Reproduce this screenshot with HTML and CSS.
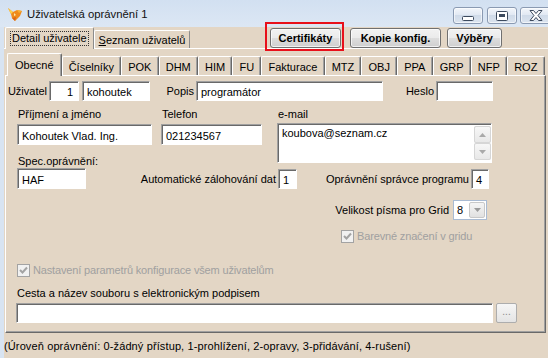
FILE: index.html
```html
<!DOCTYPE html>
<html lang="cs">
<head>
<meta charset="utf-8">
<title>Uživatelská oprávnění 1</title>
<link rel="stylesheet" href="styles.css">
</head>
<body>
<div class="window">
  <div class="titlebar">
    <svg class="app-icon" viewBox="0 0 16 16" width="16" height="16">
      <path d="M1 2 L6 6 L10 4 L15 5 L13 10 L8 15 L5 12 L4 8 Z" fill="#ef8a1c"/>
      <path d="M1 2 L6 6 L4 8 Z" fill="#fbd04a"/>
      <path d="M10 4 L15 5 L12 7 Z" fill="#f6b233"/>
      <path d="M5 12 L8 15 L9 11 Z" fill="#d9661a"/>
      <path d="M7 7 L9 9 L7 10 Z" fill="#fde9a8"/>
    </svg>
    <span class="title">Uživatelská oprávnění 1</span>
    <div class="caption">
      <span class="cbtn cbtn-min"><svg width="12" height="6" viewBox="0 0 12 6"><rect x="0.5" y="1.5" width="11" height="4" rx="1" fill="#fff" stroke="#3c4a5e"/></svg></span>
      <span class="cbtn cbtn-max"><svg width="12" height="10" viewBox="0 0 12 10"><rect x="0.5" y="0.5" width="11" height="9" rx="1" fill="#fff" stroke="#3c4a5e"/><rect x="3" y="3" width="6" height="3" fill="#3c4a5e"/></svg></span>
      <span class="cbtn cbtn-close"><svg width="14" height="11" viewBox="0 0 14 11"><path d="M1 0.5 H4.5 L7 3.5 L9.5 0.5 H13 L9 5.5 L13 10.5 H9.5 L7 7.5 L4.5 10.5 H1 L5 5.5 Z" fill="#fff" stroke="#3c4a5e" stroke-linejoin="round"/></svg></span>
    </div>
  </div>
  <div class="client">
    <div class="toprow">
      <div class="otabs">
        <div class="otab otab-active"><span class="focus">Detail uživatele</span></div>
        <div class="otab"><u>S</u>eznam uživatelů</div>
      </div>
      <div class="actions">
        <span class="highlight"><button class="btn btn-cert">Certifikáty</button></span>
        <button class="btn btn-kopie">Kopie konfig.</button>
        <button class="btn btn-vyber">Výběry</button>
      </div>
    </div>
    <div class="outer">
      <div class="itabs">
        <div class="itab itab-active">Obecné</div>
        <div class="itab">Číselníky</div>
        <div class="itab">POK</div>
        <div class="itab">DHM</div>
        <div class="itab">HIM</div>
        <div class="itab">FU</div>
        <div class="itab">Fakturace</div>
        <div class="itab">MTZ</div>
        <div class="itab">OBJ</div>
        <div class="itab">PPA</div>
        <div class="itab">GRP</div>
        <div class="itab">NFP</div>
        <div class="itab">ROZ</div>
      </div>
      <div class="panel">
        <div class="row r1">
          <span class="lbl lbl-user">Uživatel</span>
          <span class="field f-id num">1</span>
          <span class="field f-login">kohoutek</span>
          <span class="lbl lbl-popis">Popis</span>
          <span class="field f-popis">programátor</span>
          <span class="lbl lbl-heslo">Heslo</span>
          <span class="field f-heslo"></span>
        </div>
        <div class="row r2">
          <div class="col c1">
            <span class="cap">Příjmení a jméno</span>
            <span class="field f-tall">Kohoutek Vlad. Ing.</span>
            <span class="cap cap-spec">Spec.oprávnění:</span>
          </div>
          <div class="col c2">
            <span class="cap">Telefon</span>
            <span class="field f-tall">021234567</span>
          </div>
          <div class="col c3">
            <span class="cap">e-mail</span>
            <div class="field memo">
              <span class="memo-text">koubova@seznam.cz</span>
              <span class="sbar">
                <span class="sbtn"><svg width="7" height="4" viewBox="0 0 7 4"><path d="M0 4 L3.5 0 L7 4 Z" fill="#a9a9a9"/></svg></span>
                <span class="sbtn"><svg width="7" height="4" viewBox="0 0 7 4"><path d="M0 0 L3.5 4 L7 0 Z" fill="#a9a9a9"/></svg></span>
              </span>
            </div>
          </div>
        </div>
        <div class="row r3">
          <span class="field f-spec">HAF</span>
          <span class="lbl lbl-auto">Automatické zálohování dat</span>
          <span class="field f-small">1</span>
          <span class="lbl lbl-spravce">Oprávnění správce programu</span>
          <span class="field f-small f-four">4</span>
        </div>
        <div class="row r4">
          <span class="lbl lbl-grid">Velikost písma pro Grid</span>
          <span class="combo"><span class="combo-val">8</span><span class="combo-btn"><svg width="7" height="4" viewBox="0 0 7 4"><path d="M0 0 L3.5 4 L7 0 Z" fill="#9a9a9a"/></svg></span></span>
        </div>
        <div class="row r5">
          <span class="chk"><svg width="11" height="11" viewBox="0 0 11 11"><path d="M2 5 L4.5 7.5 L9 2.5" fill="none" stroke="#a3a3a3" stroke-width="2"/></svg></span>
          <span class="dis">Barevné značení v gridu</span>
        </div>
        <div class="row r6">
          <span class="chk"><svg width="11" height="11" viewBox="0 0 11 11"><path d="M2 5 L4.5 7.5 L9 2.5" fill="none" stroke="#a3a3a3" stroke-width="2"/></svg></span>
          <span class="dis">Nastavení parametrů konfigurace všem uživatelům</span>
        </div>
        <div class="row r7">
          <span class="cap">Cesta a název souboru s elektronickým podpisem</span>
        </div>
        <div class="row r8">
          <span class="field f-path"></span>
          <span class="browse">...</span>
        </div>
      </div>
    </div>
    <div class="status">(Úroveň oprávnění: 0-žádný přístup, 1-prohlížení, 2-opravy, 3-přidávání, 4-rušení)</div>
  </div>
</div>
</body>
</html>
```

FILE: styles.css
```css
* { box-sizing: border-box; }
html, body { margin: 0; padding: 0; }
body {
  width: 548px;
  height: 358px;
  overflow: hidden;
  background: #d8e4f2;
  font-family: "Liberation Sans", Arial, sans-serif;
  font-size: 11px;
  color: #000;
}
.window { display: flex; flex-direction: column; height: 358px; }

/* title bar */
.titlebar {
  height: 27px;
  flex: none;
  display: flex;
  align-items: flex-start;
  background: linear-gradient(#d2e0f1, #dce7f4);
}
.app-icon { margin: 6px 0 0 7px; flex: none; }
.title { margin: 7px 0 0 4px; font-size: 11.3px; line-height: 15px; color: #111; }
.caption { margin: 7px -15px 0 auto; display: flex; flex: none; }
.cbtn {
  height: 17px;
  width: 30px;
  display: flex;
  align-items: center;
  justify-content: center;
  border: 1px solid #8a9ab2;
  border-radius: 3px;
  background: linear-gradient(#f3f6fb 0%, #e2e9f3 45%, #d0dbe9 50%, #dbe4ef 100%);
  box-shadow: inset 0 0 0 1px rgba(255,255,255,0.6);
}
.cbtn-min svg { margin-top: 5px; }
.cbtn-max { margin-left: 4px; }
.cbtn-close { margin-left: 3px; width: 43px; justify-content: flex-start; padding-left: 8px; }

/* client */
.client { flex: 1; margin-left: 4px; background: #e3d6c5; display: flex; flex-direction: column; }
.toprow { height: 21px; display: flex; align-items: flex-end; flex: none; }
.otabs { display: flex; align-items: flex-end; margin-left: 1px; }
.otab {
  height: 18px;
  padding: 2px 4px 0;
  border: 1px solid #fff;
  border-right-color: #8c8c8c;
  border-bottom: none;
  border-radius: 2px 2px 0 0;
  line-height: 14px;
  background: #e3d6c5;
}
.otab-active {
  position: relative;
  height: 22px;
  margin-bottom: -1px;
  padding-top: 3px;
}
.focus { border: 1px dotted #333; padding: 0 1px; display: inline-block; line-height: 13px; }
.actions { margin: 1px 46px 0 auto; align-self: flex-start; display: flex; }
.btn {
  height: 20px;
  padding: 0;
  font-family: "Liberation Sans", Arial, sans-serif;
  font-size: 11px;
  font-weight: bold;
  color: #000;
  border: 1px solid #707070;
  border-radius: 3px;
  background: linear-gradient(#f2f2f2 0%, #ebebeb 48%, #dddddd 52%, #cfcfcf 100%);
  box-shadow: inset 0 0 0 1px rgba(255,255,255,0.7);
}
.highlight { position: relative; display: flex; }
.highlight::after {
  content: "";
  position: absolute;
  left: -5px; top: -6px; right: -3px; bottom: -3px;
  border: 2px solid #e8101a;
}
.btn-cert { width: 71px; }
.btn-kopie { width: 91px; margin-left: 9px; }
.btn-vyber { width: 55px; margin-left: 6px; }

.outer { border-top: 1px solid #fff; flex: none; }
.itabs { height: 26px; display: flex; align-items: flex-end; padding-left: 3px; }
.itab {
  height: 19px;
  padding: 3px 6.15px 0;
  line-height: 14px;
  border: 1px solid #fff;
  border-right-color: #696969;
  border-bottom: none;
  border-radius: 2px 2px 0 0;
  box-shadow: inset -1px 0 #a0a0a0;
  background: #e3d6c5;
  white-space: nowrap;
}
.itab-active {
  position: relative;
  height: 23px;
  margin-bottom: -1px;
  padding-top: 4px;
  padding-left: 7px; padding-right: 7px;
}
.panel {
  margin-left: 1px;
  width: 541px;
  height: 258px;
  border: 1px solid #fff;
  border-right-color: #696969;
  border-bottom-color: #696969;
  box-shadow: inset -1px -1px #a0a0a0;
}

/* form */
.row { display: flex; align-items: center; }
.lbl { white-space: nowrap; text-align: right; margin-right: 2px; flex: none; }
.field {
  display: block;
  flex: none;
  height: 20px;
  background: #fff;
  border: 1px solid #a0a0a0;
  border-right-color: #fff;
  border-bottom-color: #fff;
  box-shadow: inset 1px 1px #696969;
  padding: 3px 3px 0 4px;
  line-height: 14px;
  white-space: nowrap;
  overflow: hidden;
}
.num { text-align: right; padding-right: 5px; }

.r1 { margin-top: 5px; }
.lbl-user { width: 41px; }
.f-id { width: 30px; margin-right: 3px; }
.f-login { width: 68px; }
.lbl-popis { width: 44px; }
.f-popis { width: 187px; }
.lbl-heslo { width: 51px; }
.f-heslo { width: 57px; }

.r2 { margin-top: 7px; align-items: flex-start; }
.col { display: flex; flex-direction: column; }
.c1 { margin-left: 11px; width: 135px; }
.c2 { margin-left: 9px; width: 101px; }
.c3 { margin-left: 15px; width: 215px; }
.cap { display: block; height: 13px; line-height: 13px; padding-left: 1px; margin-bottom: 3px; white-space: nowrap; }
.f-tall { height: 21px; padding-top: 4px; }
.cap-spec { margin-top: 10px; margin-bottom: 0; }
.memo {
  margin-top: -1px;
  height: 40px;
  display: flex;
  padding: 2px 0 2px 4px;
}
.memo-text { flex: 1; line-height: 14px; }
.sbar { width: 17px; display: flex; flex-direction: column; justify-content: space-between; background: #f4f4f4; }
.sbtn {
  height: 17px;
  display: flex;
  align-items: center;
  justify-content: center;
  border: 1px solid #d6d6d6;
  border-radius: 2px;
  background: linear-gradient(#f7f7f7, #e8e8e8);
}

.r3 { height: 21px; }
.f-spec { width: 69px; height: 21px; margin-left: 11px; padding-top: 4px; }
.lbl-auto { width: 190px; }
.f-small { width: 19px; height: 20px; padding-left: 4px; }
.lbl-spravce { width: 172px; }
.f-four { width: 18px; }

.r4 { margin-top: 11px; height: 20px; }
.lbl-grid { width: 443px; margin-right: 4px; }
.combo {
  width: 34px;
  height: 20px;
  display: flex;
  border: 1px solid #a9bbd3;
  background: #fff;
  padding: 1px;
}
.combo-val { flex: 1; padding-left: 2px; line-height: 16px; }
.combo-btn {
  width: 16px;
  display: flex;
  align-items: center;
  justify-content: center;
  border: 1px solid #c8c8c8;
  border-radius: 2px;
  background: linear-gradient(#f5f5f5, #e1e1e1);
}

.chk {
  width: 13px;
  height: 13px;
  flex: none;
  border: 1px solid #a3a3a3;
  background: #f1f1f1;
  display: flex;
  align-items: center;
  justify-content: center;
}
.dis { color: #a0a0a0; margin-left: 3px; white-space: nowrap; line-height: 13px; letter-spacing: -0.15px; }
.r5 { margin-top: 10px; padding-left: 335px; }
.r6 { margin-top: 21px; padding-left: 11px; }
.r7 { margin-top: 10px; padding-left: 10px; }
.r7 .cap { margin-bottom: 0; }
.r8 { margin-top: 3px; }
.f-path { width: 477px; margin-left: 10px; }
.browse {
  width: 21px;
  height: 20px;
  margin-left: 3px;
  border: 1px solid #adadad;
  border-radius: 2px;
  background: linear-gradient(#f6f6f6, #e4e4e4);
  color: #8a8a8a;
  text-align: center;
  line-height: 16px;
  font-size: 10px;
}

.status { margin-top: 6px; line-height: 14px; white-space: nowrap; letter-spacing: 0.12px; }
```
